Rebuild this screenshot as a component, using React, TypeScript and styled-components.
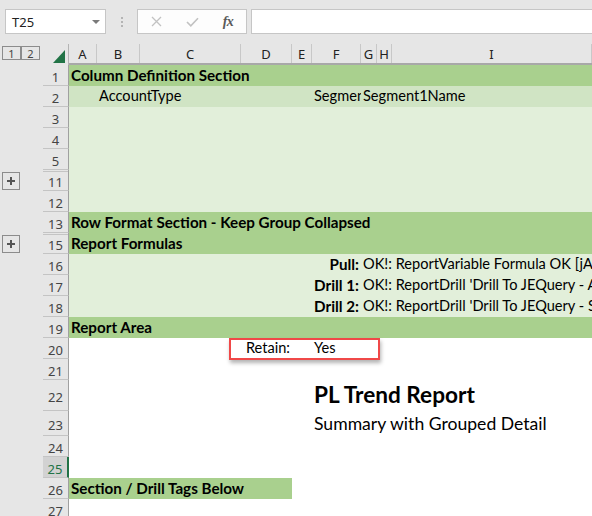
import React from 'react';
import styled, { createGlobalStyle, css } from 'styled-components';

const GREEN_DARK = '#a9d08e';
const GREEN_MID = '#d0e4c4';
const GREEN_LIGHT = '#e2efda';
const CHROME = '#e6e6e6';
const EXCEL_GREEN = '#217346';

const COLS = '28px 43px 101px 51px 20px 49px 16px 15px 1fr';
const CELL_FONT = '"Lato", "Liberation Sans", sans-serif';
const UI_FONT = '"Noto Sans", "Open Sans", sans-serif';

type Fill = 'dark' | 'mid' | 'light' | 'none';

const fillColor = (f: Fill) =>
  f === 'dark' ? GREEN_DARK : f === 'mid' ? GREEN_MID : f === 'light' ? GREEN_LIGHT : '#ffffff';

const GlobalStyle = createGlobalStyle`
  html, body { margin: 0; padding: 0; }
  body {
    background: ${CHROME};
    width: 592px;
    height: 516px;
    overflow: hidden;
    font-family: ${UI_FONT};
  }
`;

const Page = styled.div`
  width: 592px;
  height: 516px;
  overflow: hidden;
  display: flex;
  flex-direction: column;
  background: ${CHROME};
`;

/* ---------- Formula bar ---------- */

const FormulaBar = styled.div`
  height: 44px;
  flex: none;
  display: flex;
  align-items: flex-start;
  padding: 9px 0 0 5px;
  box-sizing: border-box;
`;

const NameBox = styled.div`
  width: 101px;
  height: 25px;
  box-sizing: border-box;
  background: #ffffff;
  border: 1px solid #c6c6c6;
  display: flex;
  align-items: center;
  justify-content: space-between;
  padding: 0 5px 0 6px;
  font: 13px ${UI_FONT};
  color: #222;
`;

const DropArrow = styled.span`
  width: 0;
  height: 0;
  border-left: 4px solid transparent;
  border-right: 4px solid transparent;
  border-top: 4px solid #7a7a7a;
  margin-top: 1px;
`;

const Grip = styled.div`
  width: 31px;
  height: 25px;
  flex: none;
  display: flex;
  flex-direction: column;
  align-items: center;
  justify-content: center;
  gap: 2px;
`;

const GripDot = styled.span`
  width: 2px;
  height: 2px;
  background: #b4b4b4;
`;

const FxBox = styled.div`
  width: 110px;
  height: 25px;
  box-sizing: border-box;
  background: #fdfdfd;
  border: 1px solid #c6c6c6;
  display: flex;
  align-items: center;
`;

const FxButton = styled.div`
  width: 36px;
  height: 100%;
  display: flex;
  align-items: center;
  justify-content: center;
`;

const FxLabel = styled.span`
  font: italic 700 14px "Liberation Serif", "DejaVu Serif", serif;
  color: #5a5a5a;
  letter-spacing: -0.5px;
`;

const FormulaInput = styled.div`
  flex: 1;
  height: 25px;
  margin-left: 4px;
  box-sizing: border-box;
  background: #ffffff;
  border: 1px solid #c6c6c6;
  border-right: none;
`;

/* ---------- Sheet header ---------- */

const HeaderRow = styled.div`
  display: flex;
  height: 21px;
  flex: none;
`;

const Gutter = styled.div<{ $top?: boolean }>`
  width: 43px;
  flex: none;
  box-sizing: border-box;
  display: flex;
  align-items: ${(p) => (p.$top ? 'flex-start' : 'center')};
  padding-left: 2px;
  padding-top: ${(p) => (p.$top ? '2px' : '0')};
`;

const LevelButton = styled.div`
  width: 19px;
  height: 14px;
  box-sizing: border-box;
  border: 1px solid #8c8c8c;
  display: flex;
  align-items: center;
  justify-content: center;
  font: 11px ${UI_FONT};
  color: #444;
`;

const Corner = styled.div`
  width: 26px;
  flex: none;
  box-sizing: border-box;
  border-right: 1px solid #b4b4b4;
  display: flex;
  align-items: flex-end;
  justify-content: flex-end;
  padding: 0 3px 2px 0;
`;

const ColHeaders = styled.div`
  flex: 1;
  display: grid;
  grid-template-columns: ${COLS};
  box-sizing: border-box;
  border-bottom: 2px solid #a8a8a8;
`;

const ColHeader = styled.div`
  box-sizing: border-box;
  border-right: 1px solid #c8c8c8;
  display: flex;
  align-items: center;
  justify-content: center;
  font: 13px ${UI_FONT};
  color: #222;
  padding-top: 1px;
`;

/* ---------- Sheet rows ---------- */

const Row = styled.div<{ $h: number }>`
  display: flex;
  height: ${(p) => p.$h}px;
  flex: none;
`;

const RowHeader = styled.div<{ $selected?: boolean; $hiddenAbove?: boolean }>`
  width: 26px;
  flex: none;
  box-sizing: border-box;
  border-bottom: 1px solid #c4c4c4;
  border-right: 1px solid #a0a0a0;
  display: flex;
  align-items: center;
  justify-content: center;
  padding-top: 3px;
  font: 13px ${UI_FONT};
  color: #444;
  ${(p) =>
    p.$hiddenAbove &&
    css`
      background: linear-gradient(#c4c4c4, #c4c4c4) 0 1px / 100% 1px no-repeat;
    `}
  ${(p) =>
    p.$selected &&
    css`
      background: #d2d2d2;
      color: ${EXCEL_GREEN};
      border-right: 2px solid ${EXCEL_GREEN};
    `}
`;

const RowBody = styled.div<{ $fill: Fill }>`
  flex: 1;
  min-width: 0;
  display: grid;
  grid-template-columns: ${COLS};
  background: ${(p) => fillColor(p.$fill)};
  position: relative;
`;

const Cell = styled.div<{
  $col: string;
  $align?: 'left' | 'right';
  $bold?: boolean;
  $clip?: boolean;
  $size?: number;
  $pb?: number;
  $fill?: Fill;
}>`
  grid-column: ${(p) => p.$col};
  grid-row: 1;
  min-width: 0;
  display: flex;
  align-items: flex-end;
  justify-content: ${(p) => (p.$align === 'right' ? 'flex-end' : 'flex-start')};
  padding: 0 2px ${(p) => p.$pb ?? 3}px;
  white-space: nowrap;
  overflow: ${(p) => (p.$clip ? 'hidden' : 'visible')};
  font-family: ${CELL_FONT};
  font-size: ${(p) => p.$size ?? (p.$bold ? 15.2 : 14.6)}px;
  font-weight: ${(p) => (p.$bold ? 700 : 400)};
  line-height: 1;
  color: #000;
  background: ${(p) => (p.$fill ? fillColor(p.$fill) : 'transparent')};
`;

const PlusButton = styled.div`
  width: 18px;
  height: 18px;
  box-sizing: border-box;
  border: 1px solid #8c8c8c;
  position: relative;
  &::before,
  &::after {
    content: '';
    position: absolute;
    background: #555;
    left: 50%;
    top: 50%;
    transform: translate(-50%, -50%);
  }
  &::before {
    width: 8px;
    height: 2px;
  }
  &::after {
    width: 2px;
    height: 8px;
  }
`;

const RetainBox = styled.div`
  position: absolute;
  left: 160px;
  top: 0;
  width: 151px;
  height: 22px;
  box-sizing: border-box;
  border: 2px solid #f04848;
  box-shadow: 1px 3px 4px rgba(0, 0, 0, 0.3);
  z-index: 1;
  pointer-events: none;
`;

/* ---------- Components ---------- */

const COLUMN_LETTERS = ['A', 'B', 'C', 'D', 'E', 'F', 'G', 'H', 'I'];

type RowProps = {
  n: number;
  fill: Fill;
  h?: number;
  hiddenAbove?: boolean;
  plus?: boolean;
  selected?: boolean;
  children?: React.ReactNode;
};

function SheetRow({ n, fill, h = 21, hiddenAbove, plus, selected, children }: RowProps) {
  return (
    <Row $h={h}>
      <Gutter>{plus && <PlusButton />}</Gutter>
      <RowHeader $hiddenAbove={hiddenAbove} $selected={selected}>
        {n}
      </RowHeader>
      <RowBody $fill={fill}>{children}</RowBody>
    </Row>
  );
}

function CloseIcon() {
  return (
    <svg width="11" height="11" viewBox="0 0 11 11">
      <path d="M1 1 L10 10 M10 1 L1 10" stroke="#c2c2c2" strokeWidth="1.3" fill="none" />
    </svg>
  );
}

function CheckIcon() {
  return (
    <svg width="13" height="10" viewBox="0 0 13 10">
      <path d="M1 5 L4.8 8.8 L12 1.2" stroke="#c2c2c2" strokeWidth="1.6" fill="none" />
    </svg>
  );
}

function SelectAllTriangle() {
  return (
    <svg width="12" height="13" viewBox="0 0 12 13">
      <polygon points="12,0 12,13 0,13" fill={EXCEL_GREEN} />
    </svg>
  );
}

export default function App() {
  return (
    <Page>
      <GlobalStyle />
      <FormulaBar>
        <NameBox>
          <span>T25</span>
          <DropArrow />
        </NameBox>
        <Grip>
          <GripDot />
          <GripDot />
          <GripDot />
        </Grip>
        <FxBox>
          <FxButton>
            <CloseIcon />
          </FxButton>
          <FxButton>
            <CheckIcon />
          </FxButton>
          <FxButton>
            <FxLabel>fx</FxLabel>
          </FxButton>
        </FxBox>
        <FormulaInput />
      </FormulaBar>

      <HeaderRow>
        <Gutter $top>
          <LevelButton>1</LevelButton>
          <LevelButton>2</LevelButton>
        </Gutter>
        <Corner>
          <SelectAllTriangle />
        </Corner>
        <ColHeaders>
          {COLUMN_LETTERS.map((c) => (
            <ColHeader key={c}>{c}</ColHeader>
          ))}
        </ColHeaders>
      </HeaderRow>

      <SheetRow n={1} fill="dark">
        <Cell $col="1" $bold>
          Column Definition Section
        </Cell>
      </SheetRow>
      <SheetRow n={2} fill="mid">
        <Cell $col="2">AccountType</Cell>
        <Cell $col="6" $clip>
          Segment1
        </Cell>
        <Cell $col="7">Segment1Name</Cell>
      </SheetRow>
      <SheetRow n={3} fill="light" />
      <SheetRow n={4} fill="light" />
      <SheetRow n={5} fill="light" />
      <SheetRow n={11} fill="light" hiddenAbove plus />
      <SheetRow n={12} fill="light" />
      <SheetRow n={13} fill="dark">
        <Cell $col="1" $bold>
          Row Format Section - Keep Group Collapsed
        </Cell>
      </SheetRow>
      <SheetRow n={15} fill="dark" hiddenAbove plus>
        <Cell $col="1" $bold>
          Report Formulas
        </Cell>
      </SheetRow>
      <SheetRow n={16} fill="light">
        <Cell $col="6" $align="right" $bold>
          Pull:
        </Cell>
        <Cell $col="7">OK!: ReportVariable Formula OK [jAccountType]</Cell>
      </SheetRow>
      <SheetRow n={17} fill="light">
        <Cell $col="6" $align="right" $bold>
          Drill 1:
        </Cell>
        <Cell $col="7">OK!: ReportDrill 'Drill To JEQuery - Account' OK</Cell>
      </SheetRow>
      <SheetRow n={18} fill="light">
        <Cell $col="6" $align="right" $bold>
          Drill 2:
        </Cell>
        <Cell $col="7">OK!: ReportDrill 'Drill To JEQuery - Segment' OK</Cell>
      </SheetRow>
      <SheetRow n={19} fill="dark">
        <Cell $col="1" $bold>
          Report Area
        </Cell>
      </SheetRow>
      <SheetRow n={20} fill="none">
        <Cell $col="4" $align="right">
          Retain:
        </Cell>
        <Cell $col="6">Yes</Cell>
        <RetainBox />
      </SheetRow>
      <SheetRow n={21} fill="none" />
      <SheetRow n={22} fill="none" h={31}>
        <Cell $col="6" $bold $size={22.6} $pb={4}>
          PL Trend Report
        </Cell>
      </SheetRow>
      <SheetRow n={23} fill="none" h={25}>
        <Cell $col="6" $size={17.6} $pb={3}>
          Summary with Grouped Detail
        </Cell>
      </SheetRow>
      <SheetRow n={24} fill="none" />
      <SheetRow n={25} fill="none" selected />
      <SheetRow n={26} fill="none">
        <Cell $col="1 / 5" $bold $fill="dark">
          Section / Drill Tags Below
        </Cell>
      </SheetRow>
      <SheetRow n={27} fill="none" />
    </Page>
  );
}
